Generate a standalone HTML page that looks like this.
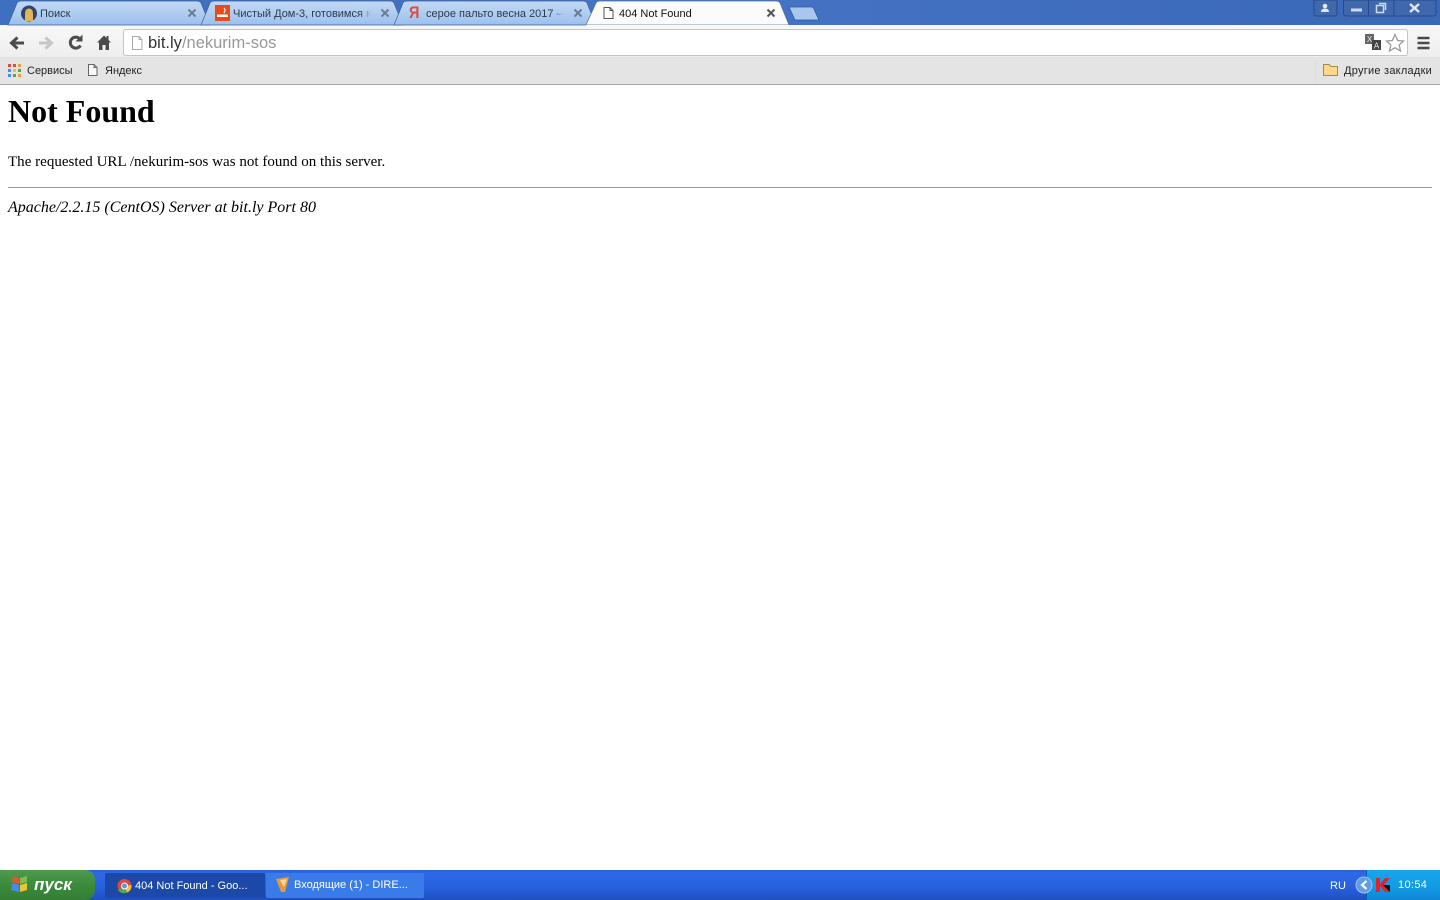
<!DOCTYPE html>
<html><head><meta charset="utf-8"><title>404 Not Found</title>
<style>
html,body{margin:0;padding:0;width:1440px;height:900px;overflow:hidden;background:#fff}
.a{position:absolute;white-space:nowrap}
.ui{font-family:"Liberation Sans",sans-serif;font-size:11px;line-height:14px;color:#222}
.s{font-family:"Liberation Serif",serif;color:#000}
.fade{-webkit-mask-image:linear-gradient(90deg,#000 92%,transparent 100%);mask-image:linear-gradient(90deg,#000 92%,transparent 100%)}
svg{position:absolute;left:0;top:0}
</style></head><body>
<div class="a" style="left:0;top:0;width:1440px;height:25px;background:linear-gradient(90deg,#3f6fc0 0,#4673c4 50%,#3a68b8 100%)"></div>
<div class="a" style="left:0;top:25px;width:1440px;height:32px;background:linear-gradient(#f8f8f8,#eeeeee)"></div>
<div class="a" style="left:0;top:57px;width:1440px;height:27px;background:#e4e4e4"></div>
<div class="a" style="left:0;top:84px;width:1440px;height:1px;background:#a8a8a8"></div>

<svg width="1440" height="90" viewBox="0 0 1440 90">
<defs>
<linearGradient id="t" x1="0" y1="0" x2="0" y2="1"><stop offset="0" stop-color="#c3d9f5"/><stop offset="1" stop-color="#9cc0ee"/></linearGradient>
</defs>
<path d="M8 25 L17 3 Q18 1 21 1 H197 Q200 1 201 3 L210 25Z" fill="url(#t)" stroke="#3c5f98" stroke-width=".7"/>
<path d="M201 25 L210 3 Q211 1 214 1 H390 Q393 1 394 3 L403 25Z" fill="url(#t)" stroke="#3c5f98" stroke-width=".7"/>
<path d="M394 25 L403 3 Q404 1 407 1 H583 Q586 1 587 3 L596 25Z" fill="url(#t)" stroke="#3c5f98" stroke-width=".7"/>
<path d="M586 25 L596 3 Q597 1 600 1 H776 Q779 1 780 3 L789 25Z" fill="#fbfbfb" stroke="#5a6f94" stroke-width=".7"/>
<path d="M586 25 H789V27H586Z" fill="#f8f8f8"/>
<path d="M790 7 H812 Q813 7 813.500 8 L818.500 19 Q819 20 817 20 H796 Q795 20 794.500 19 L789.500 8 Q789 7 790 7Z" fill="#a9c6ef" stroke="#31589c" stroke-width=".8"/>
<!-- favicon search -->
<circle cx="29" cy="13.500" r="8" fill="#2f4468"/><path d="M25 21V14Q25 8.500 29 8.500T33 14V21Z" fill="#e3b35a"/>
<!-- favicon smoke -->
<rect x="215" y="5" width="15" height="16" fill="#ea4a18"/><rect x="217" y="14.500" width="11" height="2.500" fill="#fff"/><path d="M224 13Q226 10 224 8" stroke="#fff" fill="none" stroke-width="1.200"/>
<!-- page icons -->
<path d="M604 7.500H610L613 10.500V18.500H604ZM610 7.500V10.500H613" fill="#fff" stroke="#555"/>
<path d="M88.500 64.500H94L97 67.500V75.500H88.500ZM94 64.500V67.500H97" fill="#f8f8f8" stroke="#666"/>
<!-- tab close -->
<g stroke="#6a7d92" stroke-width="2" fill="none"><path d="M188.500 9.500L195.500 16.500M195.500 9.500L188.500 16.500"/><path d="M381.500 9.500L388.500 16.500M388.500 9.500L381.500 16.500"/><path d="M574.500 9.500L581.500 16.500M581.500 9.500L574.500 16.500"/></g>
<path d="M767.500 9.500L774.500 16.500M774.500 9.500L767.500 16.500" stroke="#555" stroke-width="2" fill="none"/>
<!-- nav -->
<path d="M24 43H13M17.500 37.500L11.500 43L17.500 48.500" stroke="#4c4c4c" stroke-width="3" fill="none"/>
<path d="M39 43H50M45.500 37.500L51.500 43L45.500 48.500" stroke="#c6c6c6" stroke-width="3" fill="none"/>
<path d="M80.500 45.500A5.500 5.500 0 1 1 79.500 38.500" stroke="#4c4c4c" stroke-width="3" fill="none"/><path d="M75.500 41.500H82.500V34.500Z" fill="#4c4c4c"/>
<path d="M104 35.500L97 42.500H99V50H102.500V45H105.500V50H109V42.500H111L108.500 40V36H106.500V38Z" fill="#4a4a4a"/>
<!-- omnibox -->
<rect x="123.500" y="29.500" width="1284" height="26" rx="2" fill="#fff" stroke="#c4c4c4"/>
<path d="M132.500 36.500H139L142 39.500V49.500H132.500ZM139 36.500V39.500H142" fill="#fff" stroke="#aaa"/>
<rect x="1365" y="34" width="9" height="10" fill="#666"/><rect x="1372" y="40" width="9" height="10" fill="#444"/>
<text x="1369.500" y="42" font-family="Liberation Sans" font-size="8" fill="#eee" text-anchor="middle">X</text>
<text x="1376.500" y="48.500" font-family="Liberation Sans" font-size="8" fill="#eee" text-anchor="middle">A</text>
<path d="M1395 34.500L1397.700 40.500L1403.500 41L1399.200 45L1400.500 51L1395 47.800L1389.500 51L1390.800 45L1386.500 41L1392.300 40.500Z" fill="#fff" stroke="#9a9a9a" stroke-width="1.300"/>
<path d="M1417.500 38H1429.500M1417.500 43H1429.500M1417.500 48H1429.500" stroke="#4a4a4a" stroke-width="2.500"/>
<!-- apps -->
<g>
<rect x="8" y="64" width="3" height="3" fill="#d9503f"/><rect x="13" y="64" width="3" height="3" fill="#d9503f"/><rect x="18" y="64" width="3" height="3" fill="#e8a33d"/>
<rect x="8" y="69" width="3" height="3" fill="#4a8af0"/><rect x="13" y="69" width="3" height="3" fill="#f0c02a"/><rect x="18" y="69" width="3" height="3" fill="#4fa84f"/>
<rect x="8" y="74" width="3" height="3" fill="#4a8af0"/><rect x="13" y="74" width="3" height="3" fill="#4fa84f"/><rect x="18" y="74" width="3" height="3" fill="#e8a33d"/>
</g>
<!-- folder -->
<path d="M1323.500 64.500H1329L1331 66.500H1337.500V75.500H1323.500Z" fill="#fbd88a" stroke="#a98a4c"/>
<path d="M1315.500 60V82" stroke="#dcdcdc"/>
<!-- window buttons -->
<path d="M1314 0V13Q1314 16 1317 16H1334Q1337 16 1337 13V0Z" fill="#3f68ae" stroke="#2a4a85"/>
<path d="M1343.500 0V13Q1343.500 16 1346.500 16H1433Q1436 16 1436 13V0Z" fill="#3f68ae" stroke="#2a4a85"/>
<path d="M1368.500 0V16M1394 0V16" stroke="#2a4a85"/>
<circle cx="1325" cy="6" r="2.300" fill="#dfe8f5"/><path d="M1321 12Q1321 8.500 1325 8.500T1329 12Z" fill="#dfe8f5"/>
<rect x="1351" y="8.500" width="11" height="3" fill="#cfdcf0"/>
<rect x="1376.500" y="5.500" width="7" height="7" fill="none" stroke="#cfdcf0" stroke-width="1.500"/><path d="M1379 3.500H1385.500V10" fill="none" stroke="#cfdcf0" stroke-width="1.500"/>
<path d="M1410 4L1419 12M1419 4L1410 12" stroke="#dfe8f5" stroke-width="2.400"/>
</svg>

<div class="a ui" style="left:40px;top:7px;color:#2d3a4a">Поиск</div>
<div class="a ui fade" style="left:233px;top:7px;width:138px;overflow:hidden;color:#2d3a4a">Чистый Дом-3, готовимся к</div>
<div class="a" style="left:409px;top:3px;font:bold 17px/20px 'Liberation Sans',sans-serif;color:#dc4a40;transform:scaleX(.85);transform-origin:left">Я</div>
<div class="a ui fade" style="left:426px;top:7px;width:138px;overflow:hidden;color:#2d3a4a">серое пальто весна 2017 —</div>
<div class="a ui" style="left:619px;top:7px;color:#111">404 Not Found</div>
<div class="a" style="left:148px;top:33px;font:16.500px/20px 'Liberation Sans',sans-serif;color:#333">bit.ly<span style="color:#999">/nekurim-sos</span></div>
<div class="a ui" style="left:27px;top:64px">Сервисы</div>
<div class="a ui" style="left:105px;top:64px">Яндекс</div>
<div class="a ui" style="left:1344px;top:64px;letter-spacing:.25px">Другие закладки</div>

<div class="a s" style="left:8px;top:93px;font-size:32px;font-weight:bold;line-height:36px">Not Found</div>
<div class="a s" style="left:8px;top:153px;font-size:15px;line-height:18px;letter-spacing:.02px">The requested URL /nekurim-sos was not found on this server.</div>
<div class="a" style="left:8px;top:187px;width:1424px;height:1px;background:#999"></div>
<div class="a s" style="left:8px;top:199px;font-size:16px;line-height:18px;font-style:italic">Apache/2.2.15 (CentOS) Server at bit.ly Port 80</div>

<div class="a" style="left:0;top:870px;width:1440px;height:30px;background:linear-gradient(#2a60d6 0,#2f6ae6 12%,#2660dc 60%,#1f50c0 100%)"></div>
<div class="a" style="left:0;top:870px;width:95px;height:30px;border-radius:0 10px 10px 0;background:linear-gradient(#4f9a4f,#3c8a3c 50%,#347e34)"></div>
<div class="a" style="left:1366px;top:870px;width:74px;height:30px;background:linear-gradient(#18a6ec,#119ae4 60%,#0f88d4);border-left:1px solid #0d5fb0;box-sizing:border-box"></div>
<div class="a" style="left:105px;top:873px;width:160px;height:25px;border-radius:2px;background:#1c48a8"></div>
<div class="a" style="left:266px;top:873px;width:158px;height:25px;border-radius:2px;background:#3a7bea"></div>
<svg width="1440" height="900" viewBox="0 0 1440 900" style="pointer-events:none">
<path d="M13 876L19 878V884L12 882Z" fill="#e0562e"/><path d="M20 878L27 876V882L20 884Z" fill="#7cc04a"/><path d="M12 883L19 885V892L11 890Z" fill="#4a8ae8"/><path d="M20 885L27 883V890L20 892Z" fill="#f2c230"/>
<circle cx="124.500" cy="886" r="7" fill="#e0483a"/><path d="M124.500 886L118 890A7 7 0 0 0 127 892.500Z" fill="#4caa50"/><path d="M124.500 886L131.500 885A7 7 0 0 1 127 892.500Z" fill="#f2c230"/><circle cx="124.500" cy="886" r="3" fill="#5a95e8" stroke="#fff"/>
<path d="M276 879L289 877L285 892L281 892Z" fill="#e89a3a"/><path d="M280 880L287 879L284 887Z" fill="#f6d69a"/>
<circle cx="1364" cy="885" r="8" fill="#5f9be8" stroke="#9cc4f4"/><path d="M1366.500 881L1362 885L1366.500 889" stroke="#fff" stroke-width="2.200" fill="none"/>
<path d="M1376 878H1380V884L1385 878H1390L1384 885L1390 892H1385L1380 886V892H1376Z" fill="#e8202a"/><path d="M1383 885H1390V892Z" fill="#111"/>
</svg>
<div class="a" style="left:34px;top:876px;font:italic bold 17px/18px 'Liberation Sans',sans-serif;color:#fff">пуск</div>
<div class="a ui" style="left:135px;top:879px;color:#fff">404 Not Found - Goo...</div>
<div class="a ui" style="left:294px;top:878px;color:#fff">Входящие (1) - DIRE...</div>
<div class="a ui" style="left:1330px;top:879px;color:#fff">RU</div>
<div class="a ui" style="left:1398px;top:878px;color:#fff;letter-spacing:.35px">10:54</div>
</body></html>
